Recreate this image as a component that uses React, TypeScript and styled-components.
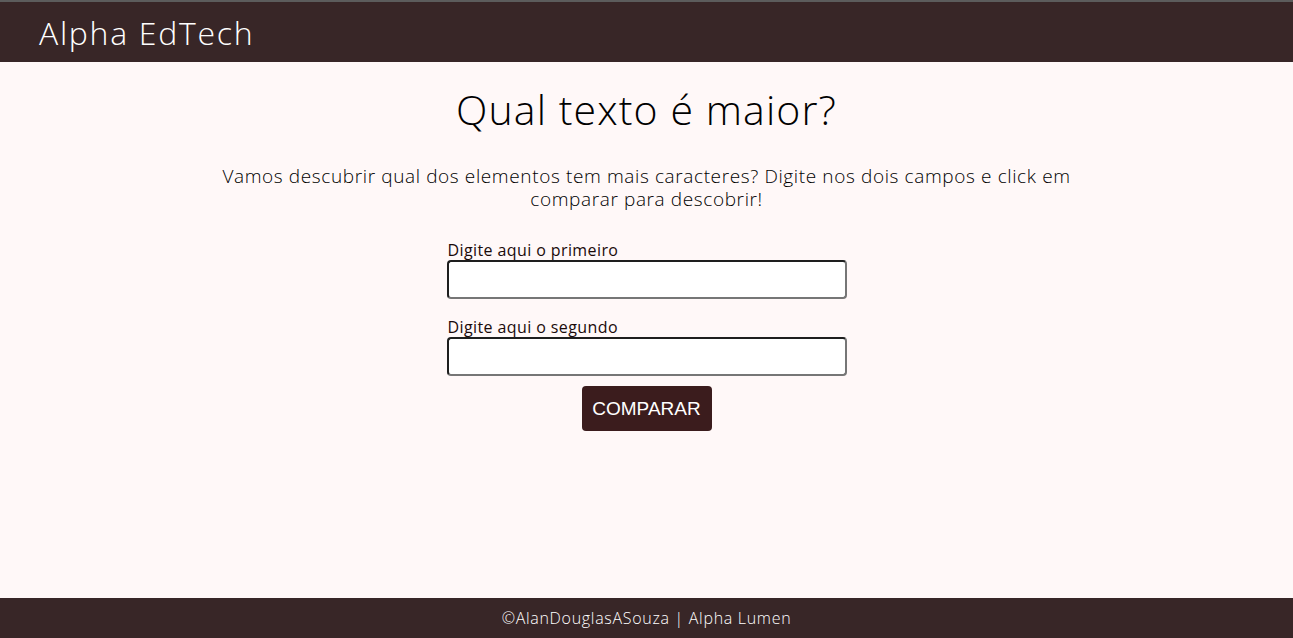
import { FC } from "react";
import styled, { createGlobalStyle } from "styled-components";

const GlobalStyle = createGlobalStyle`
  html, body {
    margin: 0;
    padding: 0;
    height: 100%;
  }
  body {
    background: #fff8f8;
    font-family: "Open Sans", "DejaVu Sans", sans-serif;
  }
  #root {
    min-height: 100vh;
    display: flex;
    flex-direction: column;
  }
`;

const App: FC = () => {
  return (
    <>
      <GlobalStyle />
      <Header>
        <Logo>Alpha EdTech</Logo>
      </Header>
      <Main>
        <Title>Qual texto é maior?</Title>
        <Description>
          Vamos descubrir qual dos elementos tem mais caracteres? Digite nos
          dois campos e click em comparar para descobrir!
        </Description>
        <Form onSubmit={(e) => e.preventDefault()}>
          <Field>
            <Label htmlFor="primeiro">Digite aqui o primeiro</Label>
            <Input id="primeiro" type="text" />
          </Field>
          <Field>
            <Label htmlFor="segundo">Digite aqui o segundo</Label>
            <Input id="segundo" type="text" />
          </Field>
          <Button type="submit">COMPARAR</Button>
        </Form>
      </Main>
      <Footer>©AlanDouglasASouza | Alpha Lumen</Footer>
    </>
  );
};

export default App;

const Header = styled.header`
  background: #382627;
  border-top: 2px solid #5c5c5c;
  height: 60px;
  display: flex;
  align-items: center;
  padding: 0 39px;
`;

const Logo = styled.h1`
  margin: 0;
  color: #ffffff;
  font-size: 32px;
  font-weight: 300;
  letter-spacing: 1.7px;
`;

const Main = styled.main`
  flex: 1;
  display: flex;
  flex-direction: column;
  align-items: center;
`;

const Title = styled.h2`
  margin: 22px 0 0;
  font-size: 41px;
  font-weight: 300;
  color: #000;
  line-height: 50px;
  letter-spacing: 1.1px;
`;

const Description = styled.p`
  width: 880px;
  margin: 31px 0 0;
  text-align: center;
  font-size: 19px;
  font-weight: 300;
  line-height: 23px;
  letter-spacing: 0.62px;
  color: #000;
`;

const Form = styled.form`
  margin-top: 30px;
  display: flex;
  flex-direction: column;
  align-items: center;
  gap: 10px;
`;

const Field = styled.div`
  display: flex;
  flex-direction: column;
  width: 400px;
  & + & {
    margin-top: 9px;
  }
`;

const Label = styled.label`
  font-size: 16px;
  line-height: 19px;
  color: #1a0a0a;
  padding-left: 1px;
  letter-spacing: 0.4px;
`;

const Input = styled.input`
  box-sizing: border-box;
  width: 400px;
  height: 39px;
  border: 2px solid;
  border-color: #1e1e1e #767676 #767676 #1e1e1e;
  border-radius: 4px;
  background: #fff;
  font-size: 16px;
  padding: 0 8px;
`;

const Button = styled.button`
  width: 130px;
  height: 45px;
  border: none;
  border-radius: 4px;
  background: #3b1c1d;
  color: #fff;
  font-family: "Liberation Sans", Arial, sans-serif;
  font-size: 19px;
  cursor: pointer;
`;

const Footer = styled.footer`
  background: #382627;
  height: 40px;
  display: flex;
  align-items: center;
  justify-content: center;
  color: #fff;
  font-size: 16px;
  font-weight: 300;
  letter-spacing: 0.7px;
`;
